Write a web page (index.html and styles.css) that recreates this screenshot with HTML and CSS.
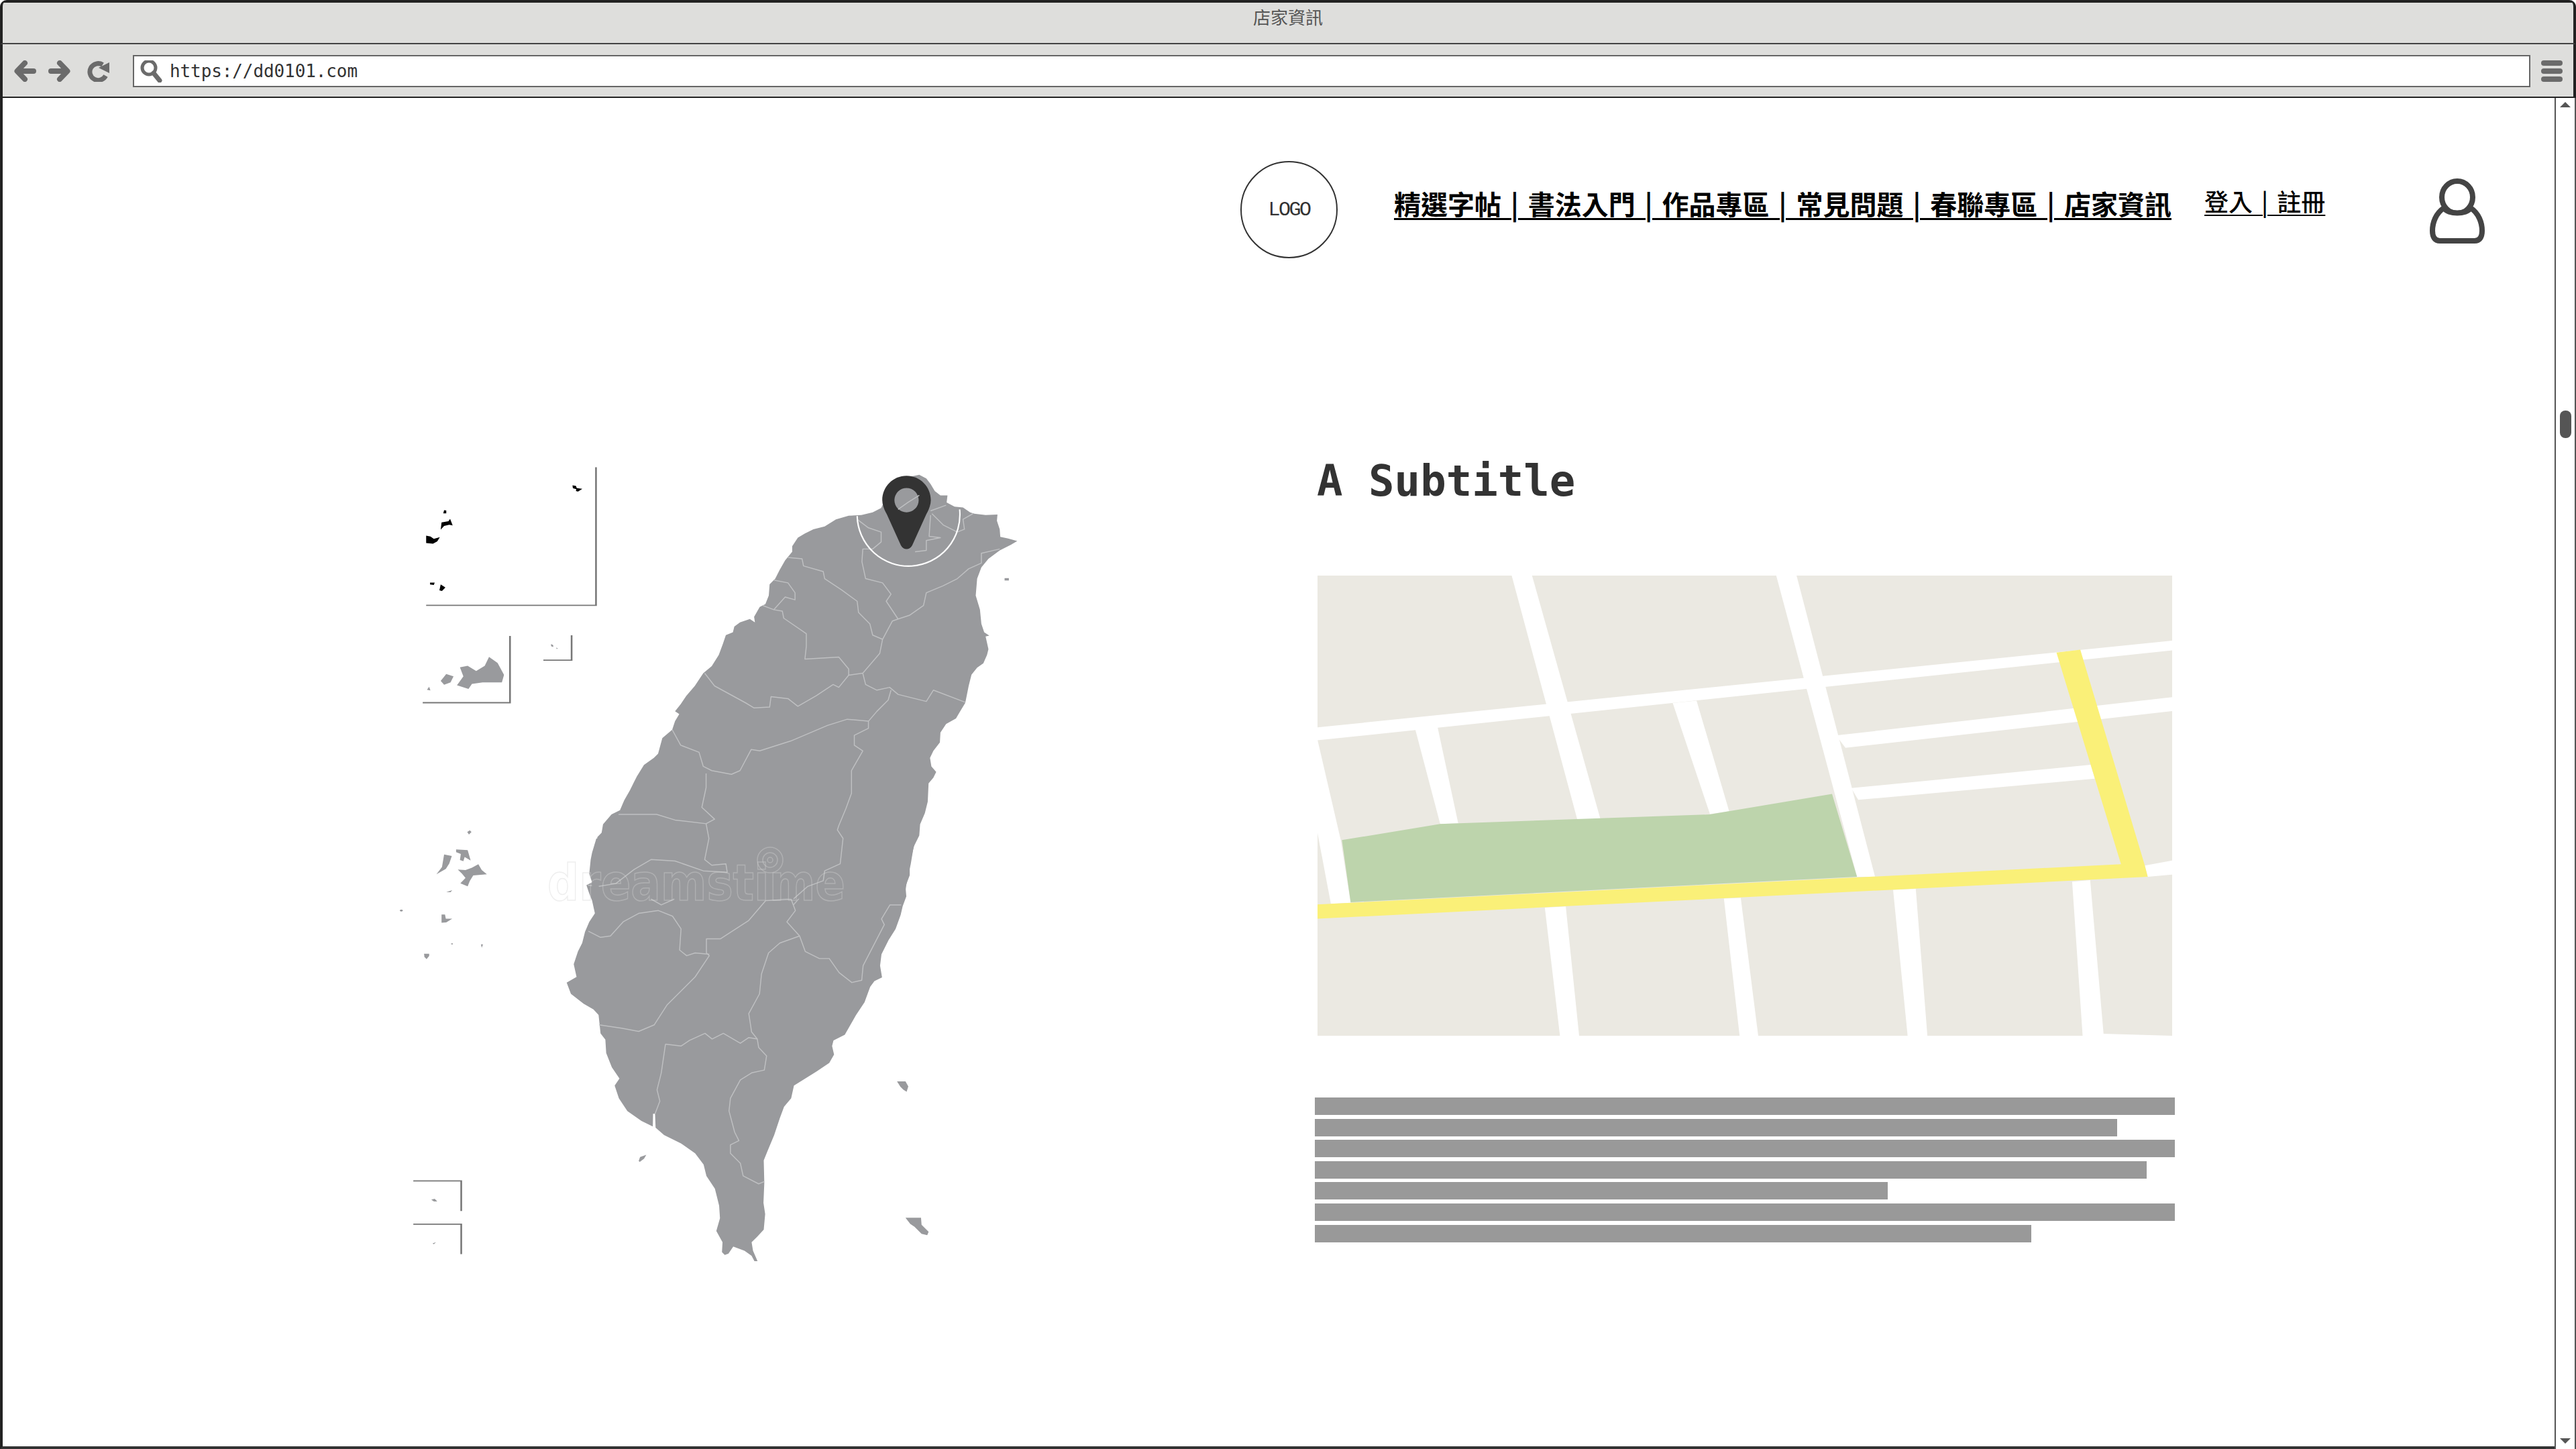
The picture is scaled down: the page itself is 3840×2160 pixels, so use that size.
FILE: index.html
```html
<!DOCTYPE html>
<html lang="zh-Hant">
<head>
    <meta charset="UTF-8">
    <title>店家資訊</title>
    <link rel="stylesheet" href="styles.css">
</head>
<body>
<div class="window">
    <div class="titlebar">店家資訊</div>

    <div class="toolbar">
        <svg class="tool-icon gap-small" viewBox="0 0 34 32"><path d="M16 4 4.5 16 16 28M5 16H29"/></svg>
        <svg class="tool-icon gap-medium" viewBox="0 0 34 32"><path d="M18 4 29.5 16 18 28M29 16H5"/></svg>
        <svg class="tool-icon gap-large reload-icon" viewBox="0 0 34 32">
            <path d="M23 6.5A12.5 12.5 0 1 0 27.5 23"/>
            <polygon class="solid" points="33,3 33,19 17,11"/>
        </svg>
        <div class="address">
            <svg class="search-icon" viewBox="0 0 34 33"><circle cx="14" cy="11" r="10"/><path d="M21 19 30 30"/></svg>
            <span class="url">https://dd0101.com</span>
        </div>
        <div class="menu-icon"><span></span><span></span><span></span></div>
    </div>

    <div class="viewport">
        <div class="page">
            <header class="site-header">
                <div class="logo">LOGO</div>
                <nav class="main-nav">精選字帖 | 書法入門 | 作品專區 | 常見問題 | 春聯專區 | 店家資訊</nav>
                <div class="login-nav">登入 | 註冊</div>
                <svg class="user-icon" viewBox="0 0 84 98">
                    <ellipse cx="42" cy="28" rx="23" ry="24"/>
                    <path d="M22 44C10 52 5 66 5 78 5 88 9 93 16 93H68C75 93 79 88 79 78 79 66 74 52 62 44 56 54 28 54 22 44Z"/>
                </svg>
            </header>

            <main class="store-info">
                <svg class="taiwan-map" viewBox="590 680 940 1220">
                    <!-- traced in the coordinates of the crop each group came from -->
                    <g transform="translate(560 660) scale(.63776 .44643)">
                        <path class="inset" d="M118 543H515V82M110 868H314V645M392 726H458V643"/>
                        <g class="black-isle">
                            <path d="M460 142l8 2 2 7 13 3-10 9-5-2 1-6-8-3z"/>
                            <path d="M158 236l2-11 5 1 0 10z"/>
                            <path d="M152 290l2-24 16-4 4-8 6 22-8-2-12 4z"/>
                            <path d="M118 310l10 3 8 8 14-6-6 14-10 8-16-2z"/>
                            <path d="M127 467h11l-2 8-9-2z"/>
                            <path d="M152 473l11 10-8 12-6-2z"/>
                        </g>
                        <g class="land">
                            <path d="M197 750l18-5 20 17 20-17 10-30 20 20 15 40-5 25-45 0-25 5-8 17-27-12 15-30z"/>
                            <path d="M165 772l17 8-7 20-15 8-8-13z"/>
                            <path d="M120 825l5-10 3 12z"/>
                            <path d="M410 672l5 4 0 6-5-3zM422 684l4 3-3 2z"/>
                            <path d="M160 1375l18 5-6 25-8 18-22 18 13-24z"/>
                            <path d="M188 1358l27 2 7 35-14-12-3 14-8-4 2-20-11-6z"/>
                            <path d="M192 1425l18 2 15-8 15-12 8 20 12 14-32 4-8 18-5 18-17-10 12-18-8-14z"/>
                            <path d="M214 1300l6-6 4 6-6 8z"/>
                            <path d="M165 1500l14-6-4 7z"/>
                            <circle cx="60" cy="1562" r="3"/>
                            <path d="M1470 452h10v8h-10z"/>
                        </g>
                    </g>

                    <g transform="translate(560 1300) scale(.63776 .40816)">
                        <path class="inset" d="M88 1128H200V1238M88 1286H200V1395"/>
                        <g class="land">
                            <path d="M154 155h8l2 15 15 0-14 14-11 1z"/>
                            <circle cx="60" cy="140" r="3"/>
                            <path d="M175 262l5-3 0 6zM246 264h5l-3 12z"/>
                            <path d="M113 298h12l0 8-6 12-5-8z"/>
                            <path d="M130 1196l8-3 6 10-8 0z"/>
                            <path d="M133 1356l8-4-5 7z"/>
                        </g>
                    </g>

                    <g transform="translate(830 1250) scale(.42088)">
                        <path class="land" d="M140 0H1272L1262 40 1250 90 1250 130 1235 170 1238 205 1225 240 1218 270 1200 320 1175 360 1150 410 1145 450 1152 492 1125 505 1110 525 1090 580 1060 625 1040 660 1020 695 980 715 975 735 982 765 965 795 920 825 880 850 840 875 830 920 805 950 790 990 770 1050 745 1110 733 1140 735 1220 732 1290 738 1330 733 1385 710 1410 690 1430 695 1460 711 1497 700 1497 690 1478 665 1460 625 1445 608 1470 595 1475 585 1465 587 1430 565 1390 578 1345 575 1300 560 1240 530 1195 520 1155 490 1115 440 1080 380 1050 350 1024 348 975 341 975 340 1020 300 1000 250 965 220 920 205 875 222 850 195 810 175 760 172 712 155 690 148 625 130 605 95 585 50 550 35 510 70 490 60 445 75 400 90 370 100 330 115 295 135 265 125 220 115 195 105 165 125 155 115 125 120 75 125 50Z"/>
                        <path class="land" d="M1205 860h30l10 18-6 19-12-8-10-10zM1235 1343h55l2 25 25 25-5 12-20-5-25-25-15-10zM290 1142l5-14 22-8-8 14-15 11z"/>
                        <g class="border">
                            <path d="M610 95 600 125 530 120 430 95 400 72 340 72 280 105 240 130 190 175 110 165"/>
                            <path d="M600 95 670 105 680 190 750 205 830 215 845 255 815 295 860 345 880 400 930 425 965 425 1000 475 1045 510 1080 502 1085 450 1160 305 1150 285 1180 235 1220 235"/>
                            <path d="M1020 0 1005 100 950 115 945 165 870 170 860 210 838 235"/>
                            <path d="M830 215 740 220 680 290 580 355 530 355 530 405 540 415 490 490 390 590 345 660 290 683 230 672 150 660"/>
                            <path d="M112 328 155 350 190 345 235 295 290 265 360 255 410 275 440 320 435 395 460 415 490 405 540 410"/>
                            <path d="M860 345 790 370 750 405 725 480 718 550 680 620 690 685 710 710 715 740 743 770 735 820 690 830 650 855 615 920 610 965 630 1040 645 1070 615 1085 615 1115 650 1150 660 1195 715 1223 735 1215"/>
                            <path d="M385 728 440 735 470 715 525 690 550 710 590 690 650 725 680 705 710 710"/>
                            <path d="M385 728 370 830 355 890 365 930 348 975"/>
                            <path d="M330 185 370 170 405 190 415 215 370 235 335 215Z"/>
                        </g>
                    </g>

                    <g transform="translate(880 690) scale(.42088)">
                        <path class="land" d="M1165 42 1190 55 1205 75 1220 100 1240 115 1265 115 1262 140 1290 155 1320 158 1345 175 1360 180 1400 185 1442 183 1440 205 1450 235 1452 262 1480 268 1512 277 1490 290 1450 310 1410 340 1385 370 1370 410 1365 470 1380 520 1385 570 1395 600 1413 612 1400 615 1410 660 1405 680 1392 710 1370 725 1350 750 1340 790 1328 850 1310 880 1295 905 1260 925 1240 955 1238 990 1215 1020 1203 1045 1208 1075 1225 1095 1215 1115 1198 1135 1195 1200 1185 1240 1168 1280 1165 1320 1145 1360 1135 1420 1120 1490 1112 1544H6L5 1400 20 1360 25 1325 40 1310 45 1280 75 1245 105 1230 120 1195 140 1160 155 1130 165 1110 190 1070 225 1045 240 1030 255 975 290 945 300 915 315 890 300 880 320 855 340 825 370 790 400 745 430 720 455 680 470 640 480 610 505 600 510 580 530 565 565 553 583 565 580 545 600 510 620 500 632 470 635 430 655 410 670 380 690 345 715 315 715 295 735 265 760 250 790 235 830 225 870 200 915 187 960 185 1000 175 1030 160 1080 60Z"/>
                        <g class="border">
                            <path d="M1450 305 1385 320 1385 355 1340 375 1300 410 1250 435 1190 460 1180 505 1130 540 1090 553 1070 560 1035 625 1025 675 965 745"/>
                            <path d="M945 200 985 230 1030 245 1030 280 1000 305 965 305 962 350 975 410 1035 425 1065 465 1048 490 1090 553"/>
                            <path d="M700 335 750 340 755 365 825 385 830 410 890 450 945 490 950 530 990 570 1000 610 1035 625"/>
                            <path d="M650 415 700 425 725 460 725 485 690 475 650 520 610 505"/>
                            <path d="M650 520 680 525 685 550 765 605 765 650 760 695 880 688 915 730 915 752 965 745"/>
                            <path d="M405 745 440 790 550 850 580 868 635 865 640 828 700 835 735 862 800 825 860 785 880 795 915 752"/>
                            <path d="M965 745 975 785 1015 805 1060 795 1090 820 1190 845 1215 805 1328 848"/>
                            <path d="M1065 805 1055 840 1015 880 985 915 985 940 935 965 935 1000 965 1020 925 1090 925 1170 905 1225 880 1285 875 1300 895 1330 885 1420 830 1445 825 1480 770 1500 720 1544"/>
                            <path d="M985 915 910 908 840 930 710 985 600 1020 570 1015 530 1090 500 1103 430 1090 400 1075 385 1025 320 1000 290 945"/>
                            <path d="M410 1100 410 1150 395 1220 440 1262 410 1278 300 1265 235 1245 100 1245"/>
                            <path d="M410 1278 420 1330 405 1405 430 1425 480 1420 485 1450 400 1445 300 1410 215 1405 155 1440 90 1490 30 1500"/>
                            <path d="M1205 170 1260 150M1210 180 1250 220 1300 245 1325 235 1320 200 1355 180M1205 185 1200 260 1240 265 1190 275 1190 310 1150 315"/>
                        </g>
                        <path class="pin-ring" d="M945 188A182 182 0 1 0 1308 165"/>
                        <path class="pin" fill-rule="evenodd" d="M1120 46C1072 46 1034 85 1034 132 1034 150 1042 168 1050 182L1100 292C1110 310 1130 310 1140 292L1190 182C1198 168 1206 150 1206 132 1206 85 1168 46 1120 46ZM1120 89A43 43 0 1 1 1120 175 43 43 0 1 1 1120 89Z"/>
                        <path class="border" d="M1090 165 1125 140 1165 115"/>
                    </g>

                    <g class="watermark">
                        <text x="816" y="1342" textLength="444" lengthAdjust="spacingAndGlyphs">dreamstime</text>
                        <circle cx="1148" cy="1282" r="19"/>
                        <circle cx="1148" cy="1282" r="11"/>
                        <circle cx="1148" cy="1282" r="4"/>
                    </g>
                </svg>

                <section class="info-column">
                    <h1 class="subtitle">A Subtitle</h1>
                    <svg class="street-map" viewBox="50 78 1470 1416" preserveAspectRatio="none">
                        <g class="street">
                            <polygon points="384,78 419,78 537,830 497,830"/>
                            <polygon points="839,78 874,78 1009,1005 978,1005"/>
                            <polygon points="50,545 1520,278 1520,308 50,585"/>
                            <polygon points="942,570 958,608 1520,495 1520,452"/>
                            <polygon points="968,732 980,768 1387,703 1380,660"/>
                            <polygon points="218,550 256,540 292,840 261,842"/>
                            <polygon points="661,470 702,463 758,803 725,812"/>
                            <polygon points="50,583 90,892 107,1085 73,1088 50,870"/>
                            <polygon points="441,1100 477,1096 500,1494 467,1494"/>
                            <polygon points="749,1072 778,1070 808,1494 776,1494"/>
                            <polygon points="1040,1045 1079,1042 1099,1494 1065,1494"/>
                            <polygon points="1348,1020 1379,1015 1402,1488 1520,1494 1366,1494"/>
                            <polygon points="1473,970 1520,955 1520,998 1478,1005"/>
                        </g>
                        <polygon class="park" points="92,892 261,842 725,813 935,750 978,1005 107,1083"/>
                        <polygon class="route" points="50,1090 1432,966 1321,315 1362,306 1473,970 1478,1005 50,1134"/>
                    </svg>
                    <div class="text-lines">
                        <div class="text-line"></div>
                        <div class="text-line" style="width: 1196px"></div>
                        <div class="text-line"></div>
                        <div class="text-line" style="width: 1240px"></div>
                        <div class="text-line" style="width: 854px"></div>
                        <div class="text-line"></div>
                        <div class="text-line" style="width: 1068px"></div>
                    </div>
                </section>
            </main>
        </div>

        <div class="scrollbar">
            <div class="arrow-up"></div>
            <div class="thumb"></div>
            <div class="arrow-down"></div>
        </div>
    </div>
</div>
</body>
</html>
```

FILE: styles.css
```css
/* Basic reset */
* {
    margin: 0;
    padding: 0;
    box-sizing: border-box;
}

body {
    width: 3840px;
    height: 2160px;
    overflow: hidden;
    background-color: #fff;
    font-family: "Noto Sans CJK TC", sans-serif;
}

/* Browser frame */
.window {
    display: flex;
    flex-direction: column;
    height: 100%;
    border-top: 4px solid #222;
    border-radius: 10px 10px 0 0;
}

.titlebar {
    height: 62px;
    padding-top: 3px;
    background-color: #dededc;
    border-left: 4px solid #222;
    border-right: 4px solid #222;
    border-bottom: 2px solid #444;
    border-radius: 6px 6px 0 0;
    color: #555;
    font-size: 26px;
    line-height: 36px;
    text-align: center;
}

.toolbar {
    display: flex;
    align-items: flex-start;
    height: 80px;
    padding: 16px 16px 0 17px;
    background-color: #dededc;
    border-left: 4px solid #222;
    border-right: 4px solid #222;
    border-bottom: 2px solid #222;
}

.tool-icon {
    flex: none;
    width: 34px;
    height: 32px;
    margin-top: 8px;
    fill: none;
    stroke: #6b6b6b;
    stroke-width: 8;
    stroke-linecap: round;
    stroke-linejoin: round;
}

.reload-icon {
    stroke-width: 7;
    stroke-linecap: butt;
}

.tool-icon .solid {
    fill: #6b6b6b;
    stroke: none;
}

.gap-small { margin-right: 16px; }
.gap-medium { margin-right: 25px; }
.gap-large { margin-right: 34px; }

.address {
    flex: 1;
    display: flex;
    align-items: center;
    height: 48px;
    margin-right: 16px;
    padding-left: 8px;
    background-color: #fff;
    border: 2px solid #666;
}

.search-icon {
    flex: none;
    width: 34px;
    height: 33px;
    margin-right: 11px;
    fill: none;
    stroke: #6b6b6b;
    stroke-width: 5;
    stroke-linecap: round;
}

.search-icon path {
    stroke-width: 7;
}

.url {
    color: #333;
    font-family: "DejaVu Sans Mono", monospace;
    font-size: 26px;
    letter-spacing: -0.1px;
}

.menu-icon {
    flex: none;
    display: flex;
    flex-direction: column;
    gap: 4px;
    width: 32px;
    margin-top: 8px;
}

.menu-icon span {
    height: 8px;
    background-color: #6b6b6b;
    border-radius: 4px;
}

/* Page area */
.viewport {
    flex: 1;
    display: flex;
    min-height: 0;
}

.page {
    flex: 1;
    padding-top: 94px;
    border-left: 4px solid #222;
    border-bottom: 4px solid #333;
}

.scrollbar {
    flex: none;
    display: flex;
    flex-direction: column;
    align-items: center;
    width: 32px;
    padding: 6px 0 8px;
    border-left: 2px solid #555;
    border-right: 2px solid #555;
}

.arrow-up,
.arrow-down {
    width: 0;
    height: 0;
    border-left: 8px solid transparent;
    border-right: 8px solid transparent;
}

.arrow-up { border-bottom: 8px solid #555; }
.arrow-down { border-top: 8px solid #555; margin-top: auto; }

.thumb {
    width: 17px;
    height: 41px;
    margin-top: 452px;
    background-color: #555;
    border-radius: 8px;
}

/* Site header */
.site-header {
    display: flex;
    align-items: flex-start;
    height: 145px;
    padding-left: 1845px;
}

.logo {
    flex: none;
    display: flex;
    align-items: center;
    justify-content: center;
    width: 145px;
    height: 145px;
    border: 2px solid #333;
    border-radius: 50%;
    color: #333;
    font-family: "Liberation Mono", monospace;
    font-size: 30px;
    letter-spacing: -2.5px;
}

.main-nav {
    flex: none;
    margin: 34px 0 0 84px;
    color: #000;
    font-size: 40px;
    font-weight: 700;
    line-height: 58px;
    word-spacing: 4.9px;
    text-decoration: underline;
    text-decoration-thickness: 3px;
    text-underline-offset: 5px;
}

.login-nav {
    flex: none;
    margin: 33px 0 0 49px;
    color: #000;
    font-size: 36px;
    font-weight: 500;
    line-height: 52px;
    word-spacing: 5px;
    text-decoration: underline;
    text-decoration-thickness: 2px;
    text-underline-offset: 5px;
}

.user-icon {
    flex: none;
    width: 84px;
    height: 98px;
    margin: 26px 0 0 155px;
    fill: #fff;
    stroke: #444;
    stroke-width: 8;
}

/* Main content */
.store-info {
    display: flex;
    align-items: flex-start;
    margin-top: 295px;
    padding-left: 586px;
}

.taiwan-map {
    flex: none;
    width: 940px;
    height: 1220px;
}

.taiwan-map .land { fill: #999a9d; }
.taiwan-map .black-isle { fill: #000; }

.taiwan-map .inset {
    fill: none;
    stroke: #777;
    stroke-width: 4;
}

.taiwan-map .border,
.taiwan-map .border path {
    fill: none;
    stroke: #bfc0c2;
    stroke-width: 3.5;
    stroke-linejoin: round;
}

.taiwan-map .pin { fill: #333; }

.taiwan-map .pin-ring {
    fill: none;
    stroke: #fff;
    stroke-width: 5;
}

.taiwan-map .watermark {
    fill: none;
    stroke: rgba(212, 212, 212, 0.39);
    stroke-width: 1.5;
}

.taiwan-map .watermark text {
    font-family: "DejaVu Sans", sans-serif;
    font-size: 74px;
    font-weight: 700;
}

.info-column {
    flex: none;
    width: 1282px;
    margin-left: 430px;
}

.subtitle {
    height: 178px;
    margin-top: -1px;
    margin-bottom: 1px;
    padding-left: 3px;
    color: #333;
    font-family: "DejaVu Sans Mono", monospace;
    font-size: 64px;
    font-weight: 700;
    line-height: 76px;
}

.street-map {
    display: block;
    width: 1274px;
    height: 686px;
    margin-left: 4px;
    background-color: #ebe9e2;
}

.street-map .street { fill: #fff; }
.street-map .park { fill: #bdd4ac; }
.street-map .route { fill: #faf078; }

.text-lines {
    display: flex;
    flex-direction: column;
    gap: 5.6px;
    margin-top: 92px;
}

.text-line {
    width: 100%;
    height: 26px;
    background-color: #999;
}
```
